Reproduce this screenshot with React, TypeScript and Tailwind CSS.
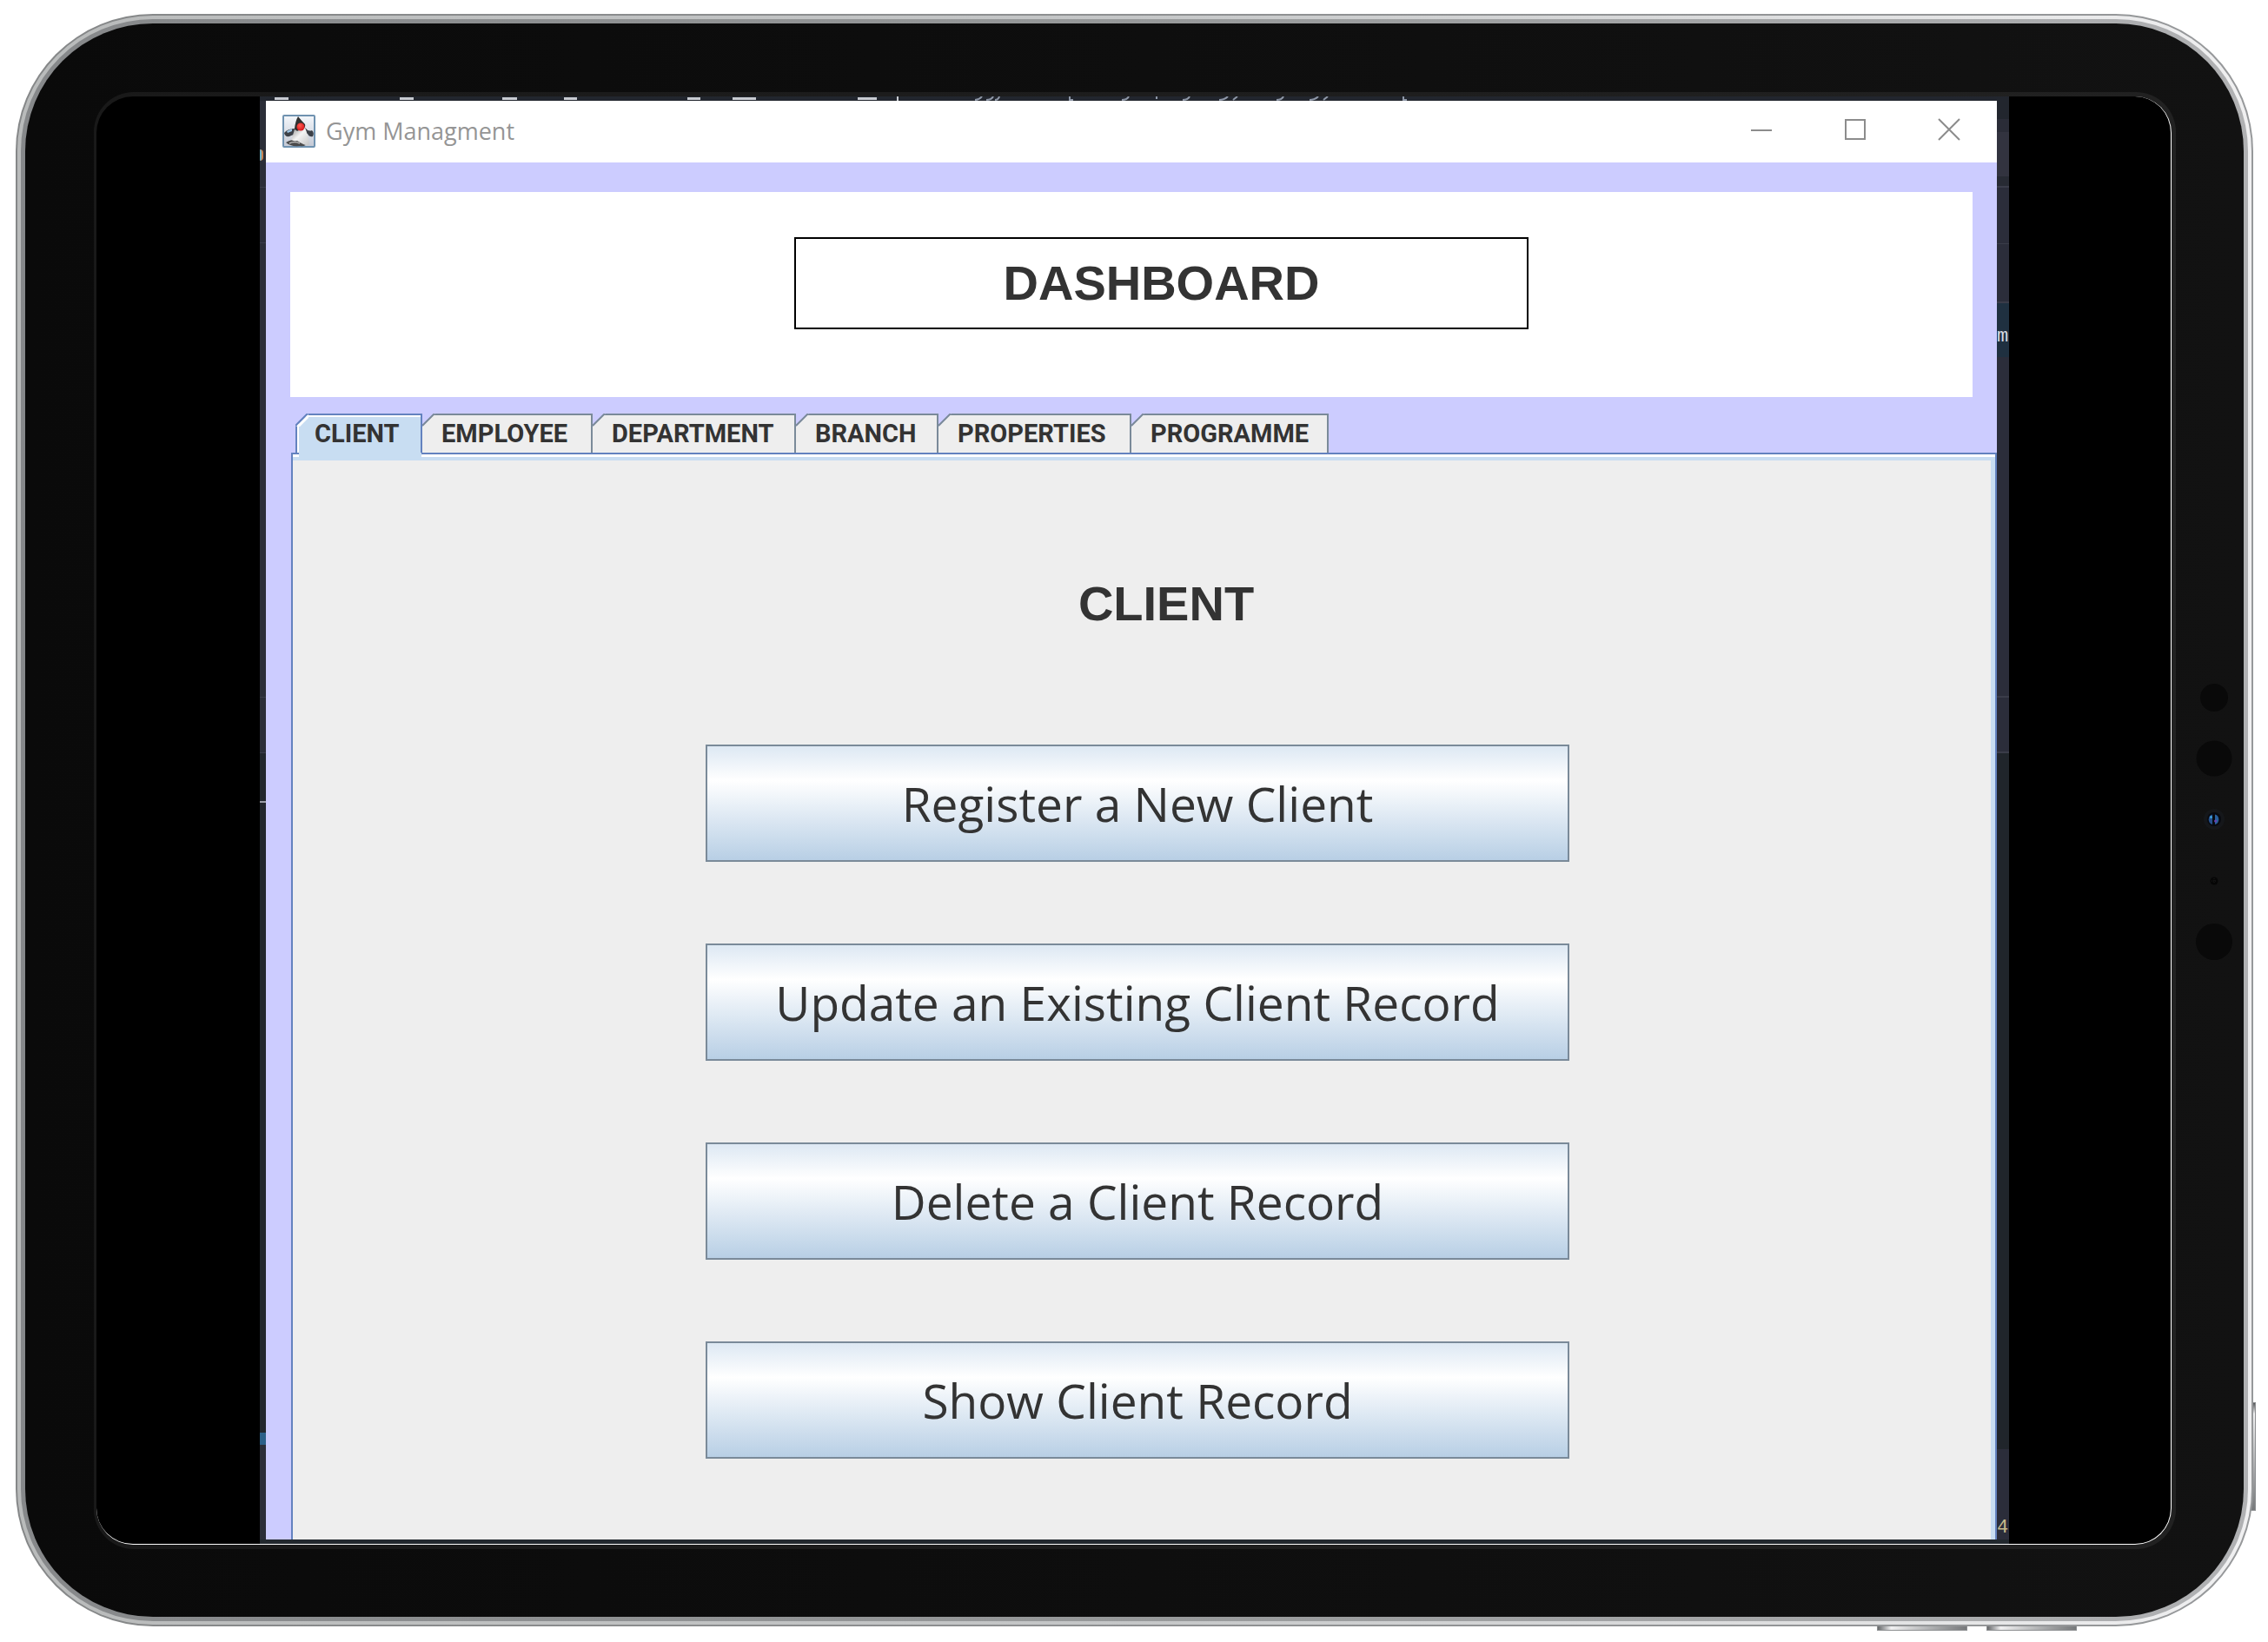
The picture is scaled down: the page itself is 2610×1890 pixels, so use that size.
import React, { useState } from "react";

const tabs = [
  { label: "CLIENT", width: "w-[146px]" },
  { label: "EMPLOYEE", width: "w-[196px]" },
  { label: "DEPARTMENT", width: "w-[234px]" },
  { label: "BRANCH", width: "w-[164px]" },
  { label: "PROPERTIES", width: "w-[222px]" },
  { label: "PROGRAMME", width: "w-[227px]" },
];

const actions = [
  "Register a New Client",
  "Update an Existing Client Record",
  "Delete a Client Record",
  "Show Client Record",
];

function DukeIcon() {
  return (
    <svg viewBox="0 0 38 38" className="size-[38px]" aria-hidden="true">
      <defs>
        <linearGradient id="sky" x1="0" y1="0" x2="0" y2="1">
          <stop offset="0" stopColor="#f4f7fb" />
          <stop offset="1" stopColor="#c3c8d4" />
        </linearGradient>
        <linearGradient id="belly" x1="0" y1="0" x2="1" y2="1">
          <stop offset="0" stopColor="#8e8e8e" />
          <stop offset="0.45" stopColor="#f4f4f4" />
          <stop offset="1" stopColor="#c4c4c4" />
        </linearGradient>
        <radialGradient id="nose" cx="0.4" cy="0.35" r="0.7">
          <stop offset="0" stopColor="#ff5a50" />
          <stop offset="1" stopColor="#d3131a" />
        </radialGradient>
      </defs>
      <rect x="1" y="1" width="36" height="36" rx="1" fill="url(#sky)" stroke="#6f92b0" strokeWidth="2" />
      <path d="M4 32 Q12 27 18 29 Q26 26 30 32 Q27 37 20 36 Q9 37 4 32Z" fill="#4b4b4b" />
      <path d="M8 33 Q14 30 20 33" stroke="#b5b5b5" strokeWidth="1.5" fill="none" />
      <path d="M15 16 Q6 16 2 21 Q3 26 8 25 Q11 23 15 23Z" fill="#3c4047" />
      <path d="M26 15 Q30 20 34 18 Q37 21 35 25 Q31 26 29 22 L25 21Z" fill="#3c4047" />
      <path d="M5 19 L11 16 L11 19 L6 21Z" fill="#9cc4e4" />
      <path d="M14 17 Q12 24 10 29 Q14 31 17 30 Q20 32 24 34 Q31 37 31 33 Q29 22 26 15Z" fill="url(#belly)" />
      <path d="M18 2 Q15 7 14 16 Q16 20 19 18 L25 16 Q27 13 26 11 Q22 7 18 2Z" fill="#303030" />
      <circle cx="21" cy="14" r="4.5" fill="url(#nose)" />
    </svg>
  );
}

function WindowControls() {
  const box = "flex w-[108px] items-center justify-center";
  return (
    <div className="flex self-stretch pr-px pb-1">
      <button className={box} aria-label="Minimize">
        <svg viewBox="0 0 26 26" className="size-[26px]" stroke="#8c8c8c" strokeWidth="2"><path d="M1 14H25" /></svg>
      </button>
      <button className={box} aria-label="Maximize">
        <svg viewBox="0 0 26 26" className="size-[26px]" stroke="#8c8c8c" strokeWidth="2" fill="none"><rect x="2" y="2" width="22" height="22" /></svg>
      </button>
      <button className={box} aria-label="Close">
        <svg viewBox="0 0 26 26" className="size-[26px]" stroke="#8c8c8c" strokeWidth="2"><path d="M1 1L25 25M25 1L1 25" /></svg>
      </button>
    </div>
  );
}

function Tab({ label, width, selected, onSelect }: { label: string; width: string; selected: boolean; onSelect: () => void }) {
  return (
    <button
      role="tab"
      aria-selected={selected}
      onClick={onSelect}
      className={
        "relative flex h-[45px] justify-start border-t-2 border-r-2 pt-[4px] font-['Roboto',sans-serif] text-[29px] leading-[34px] font-bold text-[#333333] " +
        width +
        (selected
          ? " z-10 border-l-2 border-[#6382bf] bg-[#c8ddf2] pl-[20px] shadow-[inset_2px_2px_0_#ffffff]"
          : " border-[#7a8a99] bg-[#eeeeee] pl-[22px]")
      }
    >
      {label}
      <svg
        viewBox="0 0 15 15"
        className={"absolute -top-[2px] size-[15px] " + (selected ? "-left-[2px]" : "left-0")}
        aria-hidden="true"
      >
        <path d="M0 0H15L0 15Z" fill="#ccccff" />
        {selected && <path d="M2 16L16 2" stroke="#ffffff" strokeWidth="3" />}
        <path d="M0 14L14 0" stroke={selected ? "#6382bf" : "#7a8a99"} strokeWidth="2" />
      </svg>
      {selected && <span className="absolute top-[43px] -right-px left-[2px] h-[6px] bg-[#c8ddf2]" />}
    </button>
  );
}

function GymWindow() {
  const [active, setActive] = useState("CLIENT");
  return (
    <section className="min-w-0 flex-1 bg-[#ccccff] text-[#333333]">
      <header className="flex h-[71px] items-center bg-white pb-px pl-[19px]">
        <DukeIcon />
        <h1 className="flex-1 pl-3 font-['Open_Sans',sans-serif] text-[27px] leading-[36px] text-[#959595]">Gym Managment</h1>
        <WindowControls />
      </header>
      <div className="px-[28px] pt-[34px]">
        <div className="h-[236px] bg-white pt-[52px] pr-[511px] pl-[580px]">
          <h2 className="border-2 border-black text-center font-['Liberation_Sans',sans-serif] text-[56px] leading-[102px] font-bold">
            DASHBOARD
          </h2>
        </div>
      </div>
      <div role="tablist" className="flex pt-[19px] pl-[34px]">
        {tabs.map((t) => (
          <Tab key={t.label} label={t.label} width={t.width} selected={t.label === active} onSelect={() => setActive(t.label)} />
        ))}
      </div>
      <div role="tabpanel" className="ml-[29px] border-x-2 border-t-2 border-[#6382bf]">
        <div className="border-t-[3px] border-white">
          <div className="border-t-4 border-r-[5px] border-[#c8ddf2] bg-[#eeeeee] pt-[133px] pr-[485px] pb-[93px] pl-[475px]">
            <h3 className="pl-[66px] text-center font-['Liberation_Sans',sans-serif] text-[56px] leading-[64px] font-bold">CLIENT</h3>
            <div className="flex flex-col gap-[94px] pt-[130px]">
              {actions.map((a) => (
                <button
                  key={a}
                  className="h-[135px] border-2 border-[#7a8a99] bg-linear-to-b from-[#dde8f3] via-white via-30% to-[#b8cfe5] font-['Open_Sans',sans-serif] text-[55px] leading-[75px]"
                >
                  {a}
                </button>
              ))}
            </div>
          </div>
        </div>
      </div>
    </section>
  );
}

/* Slivers of the code editor that show behind the window. */
function EditorTop() {
  return (
    <svg className="block h-[5px] w-full bg-[#22262e]" aria-hidden="true">
      <g fill="#c9ccd2">
        <rect x="17" y="1" width="16" height="3" />
        <rect x="161" y="1" width="16" height="3" />
        <rect x="279" y="1" width="17" height="3" />
        <rect x="350" y="1" width="15" height="3" />
        <rect x="492" y="1" width="15" height="3" />
        <rect x="544" y="1" width="27" height="3" />
        <rect x="688" y="1" width="22" height="3" />
        <rect x="733" y="0" width="2" height="5" />
      </g>
      <g stroke="#8f98a8" strokeWidth="2" fill="none">
        <path d="M823 4q5 0 8 -4M836 4q6 0 8 -4M846 4q4 0 5 -4M932 0v4h4M992 4q6 0 8 -4M1032 0v3M1062 4q6 0 8 -4M1104 4q6 0 10 -4M1120 4l5 -4M1170 4q6 0 8 -4M1208 4q6 0 10 -4M1224 4l5 -4M1316 0v4h4" />
      </g>
    </svg>
  );
}

function EditorLeft() {
  return (
    <div className="flex w-[7px] flex-col overflow-hidden bg-[#2b2e38]">
      <div className="h-[56px]" />
      <div className="h-[13px] w-[4px] rounded-r-full border-r-2 border-[#c9824f] bg-[#6db3c9]" />
      <div className="h-[31px] border-b border-[#3a3d49]" />
      <div className="h-[64px] border-b border-[#3a3d49]" />
      <div className="h-[523px] border-b border-[#3a3d49]" />
      <div className="h-[64px] border-b border-[#3a3d49]" />
      <div className="h-[57px] border-b-2 border-[#9a9da5] bg-[#22272d]" />
      <div className="h-[725px] bg-[#22272d]" />
      <div className="h-[14px] bg-[#2c6088]" />
    </div>
  );
}

function EditorRight() {
  return (
    <div className="flex w-[14px] flex-col bg-[#2b2d3a] font-['Liberation_Mono',monospace] text-[22px] leading-[26px] text-[#d8dce4]">
      <div className="h-[21px] bg-[#22262e]" />
      <div className="h-[15px] bg-[#2a2c37]" />
      <div className="h-[51px] bg-[#32333f]" />
      <div className="h-[13px] border-b-2 border-[#3a3c49] bg-[#272a33]" />
      <div className="h-[65px] border-b border-[#3a3c49]" />
      <div className="h-[68px] border-b-2 border-[#3a3c49]" />
      <div className="h-[62px] bg-[#1f3040] pt-[26px]">m</div>
      <div className="h-[392px] border-b-2 border-[#3a3c49]" />
      <div className="h-[64px] border-b-2 border-[#3a3c49]" />
      <div className="h-[801px] bg-[#20252b]" />
      <div className="pt-[78px] text-[#c8b98a]">4</div>
    </div>
  );
}

function Sensors() {
  return (
    <svg viewBox="0 0 60 340" className="absolute top-[752px] right-[4px] h-[340px] w-[60px]" aria-hidden="true">
      <circle cx="30" cy="24" r="16" fill="#090909" />
      <circle cx="30" cy="94" r="20.5" fill="#090909" />
      <circle cx="30" cy="164" r="12" fill="#15171a" />
      <circle cx="30" cy="164" r="8" fill="#080a10" />
      <path d="M28 158.5a6 6 0 0 0 0 11.5z" fill="#24508c" />
      <path d="M31 158.5a6 6 0 0 1 0 11.5z" fill="#285f9c" />
      <circle cx="26.5" cy="161.5" r="1.5" fill="#3f9fd8" />
      <circle cx="31.5" cy="166" r="1.5" fill="#6b3fb0" />
      <circle cx="30" cy="235" r="4.5" fill="#060606" />
      <path d="M27 235h6M30 232v6" stroke="#1c1c1c" strokeDasharray="1 1" />
      <circle cx="30" cy="305" r="21" fill="#090909" />
    </svg>
  );
}

export default function App() {
  const sideKey = "absolute border border-[#8d8f91] bg-linear-to-r from-[#66686a] via-[#f1f1f2] via-15% to-[#77797b]";
  return (
    <main className="bg-white pt-[16px] pr-[17px] pb-[17px] pl-[18px]">
      <div className="relative">
        <span className={sideKey + " right-[203px] -bottom-[5px] h-[7px] w-[104px]"} />
        <span className={sideKey + " right-[329px] -bottom-[5px] h-[7px] w-[104px]"} />
        <span className="absolute -right-[3px] bottom-[133px] h-[125px] w-[6px] border border-[#8d8f91] bg-linear-to-b from-[#55575a] via-[#f1f1f2] via-10% to-[#77797b]" />
        <div className="relative rounded-[158px] bg-linear-to-r from-[#858788] to-[#96989a] p-[2px]">
          <div className="rounded-[156px] bg-linear-to-r from-[#b9bbbb] via-[#c4c6c7] to-[#f0f0f1] p-[4px]">
            <div className="rounded-[152px] bg-linear-to-r from-[#86888a] via-[#97999a] to-[#b0b1b3] p-[5px]">
              <div className="relative rounded-[147px] bg-linear-to-r from-[#0a0a0a] to-[#121212] pt-[79px] pr-[78px] pb-[78px] pl-[79px]">
                <Sensors />
                <div className="rounded-[46px] bg-linear-to-r from-[#191919] to-[#212121] pt-[5px] pr-[5px] pb-[5px] pl-[3px]">
                  <div className="overflow-hidden rounded-[42px] border-r border-b border-white bg-black pr-[186px] pl-[188px]">
                    <EditorTop />
                    <div className="flex">
                      <EditorLeft />
                      <GymWindow />
                      <EditorRight />
                    </div>
                    <div className="h-[5px] bg-[#22282e]" />
                  </div>
                </div>
              </div>
            </div>
          </div>
        </div>
      </div>
    </main>
  );
}
